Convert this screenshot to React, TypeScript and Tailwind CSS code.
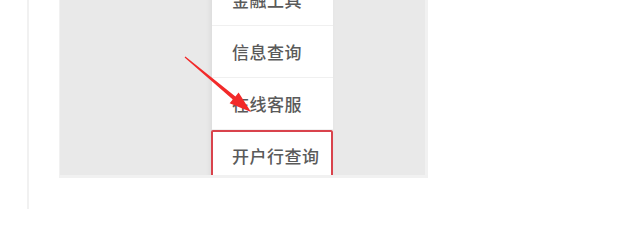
import React from "react";

const items = ["金融工具", "信息查询", "在线客服"];

export default function App() {
  return (
    <div className="relative w-[620px] h-[209px] overflow-hidden bg-white flex" style={{ fontFamily: '"Noto Sans CJK SC", "Noto Sans", sans-serif' }}>
      <div className="ml-[27px] w-[2px] h-full bg-[#f1f1f1]" />
      <div className="ml-[30px] h-[178px] w-[369px] border-l border-r-[3px] border-b-[3px] border-[#f1f1f1] bg-[#e9e9e9] flex overflow-hidden">
        <div className="ml-[152px] w-[121px] mt-[-26px] flex flex-col bg-white shadow-[-2px_0_5px_rgba(0,0,0,0.06)] self-start">
          {items.map((t) => (
            <div key={t} className="h-[52px] border-b border-[#f0f0f0] flex items-center pl-[20px] text-[17px] font-medium text-[#5a5a5a] tracking-[0.5px]">
              {t}
            </div>
          ))}
          <div className="h-[52px] border-2 border-[#d9434c] rounded-[2px] flex items-center pl-[19px] text-[17px] font-medium text-[#5a5a5a] tracking-[0.5px] -ml-px">
            开户行查询
          </div>
        </div>
      </div>
      <svg className="absolute left-0 top-0" width="620" height="209" viewBox="0 0 620 209">
        <path d="M184.6 57.5 L232.8 99.4 L229.6 103.3 L251 112 L238.6 92.5 L235.4 96.4 L185.4 56.5 Z" fill="#f22a2a" />
      </svg>
    </div>
  );
}
